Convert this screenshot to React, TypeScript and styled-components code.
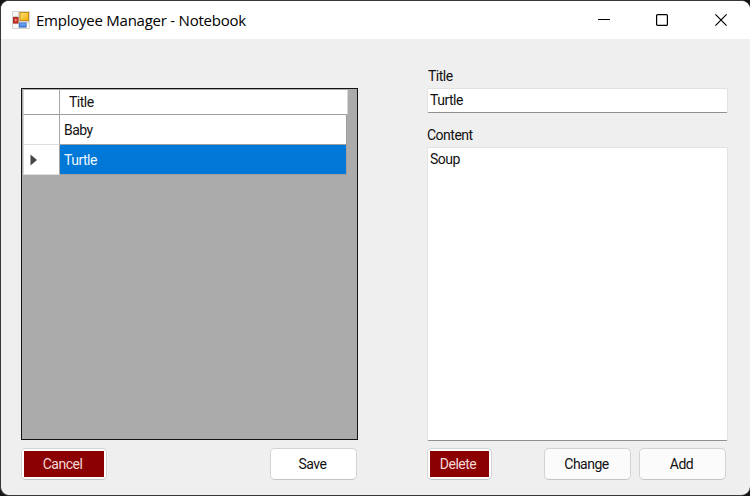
import React from "react";
import styled, { createGlobalStyle } from "styled-components";

const GlobalStyle = createGlobalStyle`
  * { box-sizing: border-box; }
  body { margin: 0; background: #151517; overflow: hidden; }
`;

const Window = styled.div`
  width: 750px;
  height: 496px;
  display: flex;
  flex-direction: column;
  overflow: hidden;
  background: #efefef;
  border: 1px solid #38363a;
  border-right-width: 0;
  border-radius: 9px;
  color: #111;
  font: 14px/18px Roboto, "Liberation Sans", sans-serif;
`;

const TitleBar = styled.header`
  height: 38px;
  flex: none;
  display: flex;
  align-items: center;
  background: #fff;
  padding-left: 11px;
`;

const Caption = styled.h1<{ $spacing: number }>`
  flex: 1;
  margin: 0 0 1px 6px;
  color: #000;
  font: 400 15px/20px "Open Sans", "Noto Sans", sans-serif;
  letter-spacing: ${(p) => p.$spacing}px;
  white-space: nowrap;
`;

const WindowButton = styled.button<{ $width: number }>`
  width: ${(p) => p.$width}px;
  height: 38px;
  padding: 0;
  border: 0;
  background: none;
  display: flex;
  align-items: center;
  justify-content: center;
`;

const Body = styled.main`
  flex: 1;
  display: flex;
  justify-content: space-between;
  padding: 28px 22px 0 20px;
`;

const ListPane = styled.section`
  width: 337px;
  padding-top: 21px;
`;

const Editor = styled.section`
  width: 301px;
`;

const Grid = styled.div`
  width: 337px;
  height: 352px;
  border: 1px solid #141414;
  background: #ababab;
  padding: 1px 0 0 1px;
`;

const GridRow = styled.div<{ $height: number; $width: number }>`
  display: grid;
  grid-template-columns: 37px 1fr;
  width: ${(p) => p.$width}px;
  height: ${(p) => p.$height}px;
`;

const RowHeader = styled.div<{ $line: string }>`
  display: flex;
  align-items: center;
  padding-left: 6px;
  background: #fff;
  border-left: 1px solid #d6d6d6;
  border-right: 1px solid #a5a5a5;
  border-bottom: 1px solid ${(p) => p.$line};
`;

const Cell = styled.div<{ $selected?: boolean; $header?: boolean }>`
  display: flex;
  align-items: center;
  padding-left: ${(p) => (p.$header ? 9 : 4)}px;
  background: ${(p) => (p.$selected ? "#0078d7" : "#fff")};
  color: ${(p) => (p.$selected ? "#eef6ff" : "#111")};
  border-bottom: 1px solid #9e9e9e;
  border-right: ${(p) => (p.$header ? "1px solid #d8d8d8" : "1px solid #a0a0a0")};
`;

const Text = styled.span<{ $spacing?: number }>`
  letter-spacing: ${(p) => p.$spacing ?? -0.5}px;
  white-space: nowrap;
`;

const Label = styled.label<{ $indent: number }>`
  display: block;
  height: 21px;
  padding-left: ${(p) => p.$indent}px;
`;

const Field = styled.div<{ $height: number; $gap: number }>`
  height: ${(p) => p.$height}px;
  margin-bottom: ${(p) => p.$gap}px;
  padding: 2px 3px 0 2px;
  background: #fff;
  border: 1px solid #e2e2e2;
  border-bottom: 1px solid #909090;
  border-radius: 2px;
`;

const Actions = styled.div<{ $top: number; $right: number }>`
  display: flex;
  gap: 8px;
  margin-top: ${(p) => p.$top}px;
  padding-right: ${(p) => p.$right}px;
`;

const Button = styled.button<{ $width: number; $danger?: boolean; $bright?: boolean; $push?: boolean }>`
  width: ${(p) => p.$width}px;
  height: 32px;
  flex: none;
  margin: 0 0 0 ${(p) => (p.$push ? "auto" : "0")};
  padding: ${(p) => (p.$danger ? "2px" : "0 2px 0 0")};
  border: 1px solid #d3d3d3;
  border-bottom-color: #c3c3c3;
  border-radius: 5px;
  background: ${(p) => (p.$bright || p.$danger ? "#fff" : "#fbfbfb")};
  color: #111;
  font: inherit;
  display: flex;
  align-items: center;
  justify-content: center;
`;

const Fill = styled.span`
  flex: 1;
  align-self: stretch;
  display: flex;
  align-items: center;
  justify-content: center;
  padding-right: 3px;
  background: #8b0000;
  color: #f2d9d9;
`;

const AppIcon = () => (
  <svg width="18" height="18" viewBox="0 0 18 18">
    <defs>
      <linearGradient id="gold" x1="0" y1="0" x2="1" y2="1">
        <stop offset="0" stopColor="#ffe477" />
        <stop offset="1" stopColor="#f3ab08" />
      </linearGradient>
      <linearGradient id="blue" x1="0" y1="0" x2="0" y2="1">
        <stop offset="0" stopColor="#83b4fa" />
        <stop offset="1" stopColor="#3e7ce2" />
      </linearGradient>
    </defs>
    <rect width="18" height="18" rx="1" fill="#d6d4d0" />
    <path d="M1 1h5v4H1zM1 13h5v4H1zM15 12h2v5h-2z" fill="#f7f7f7" />
    <rect x="8" y="1.5" width="8.5" height="8" fill="url(#gold)" stroke="#c78d15" />
    <rect x="1.5" y="6.5" width="4.5" height="5.5" fill="#d23b32" stroke="#a9201e" />
    <rect x="3" y="8" width="1.5" height="2" fill="#f28d80" />
    <rect x="7.5" y="12" width="6.5" height="4" fill="url(#blue)" stroke="#3c76d3" />
  </svg>
);

export default function App() {
  return (
    <>
      <GlobalStyle />
      <Window>
        <TitleBar>
          <AppIcon />
          <Caption $spacing={-0.24}>Employee Manager - Notebook</Caption>
          <WindowButton $width={58} aria-label="Minimize">
            <svg width="12" height="12"><path d="M0 5.5h12" stroke="#000" /></svg>
          </WindowButton>
          <WindowButton $width={58} aria-label="Maximize">
            <svg width="12" height="12"><rect x=".6" y=".6" width="10.8" height="10.8" rx="1" fill="none" stroke="#000" strokeWidth="1.2" /></svg>
          </WindowButton>
          <WindowButton $width={59} aria-label="Close">
            <svg width="12" height="12"><path d="M.4.4l11.2 11.2M11.6.4L.4 11.6" stroke="#000" strokeWidth="1.2" /></svg>
          </WindowButton>
        </TitleBar>
        <Body>
          <ListPane>
            <Grid>
              <GridRow $height={25} $width={325}>
                <RowHeader $line="#9e9e9e" />
                <Cell $header><Text>Title</Text></Cell>
              </GridRow>
              <GridRow $height={30} $width={324}>
                <RowHeader $line="#dedede" />
                <Cell><Text>Baby</Text></Cell>
              </GridRow>
              <GridRow $height={30} $width={324}>
                <RowHeader $line="#dedede">
                  <svg width="8" height="12"><path d="M0.5 0.5L7 6L0.5 11.5z" fill="#454545" /></svg>
                </RowHeader>
                <Cell $selected><Text>Turtle</Text></Cell>
              </GridRow>
            </Grid>
            <Actions $top={8} $right={1}>
              <Button $width={86} $danger><Fill><Text>Cancel</Text></Fill></Button>
              <Button $width={87} $bright $push><Text>Save</Text></Button>
            </Actions>
          </ListPane>
          <Editor>
            <Label $indent={1}><Text>Title</Text></Label>
            <Field $height={25} $gap={13}><Text>Turtle</Text></Field>
            <Label $indent={0}><Text>Content</Text></Label>
            <Field $height={294} $gap={0}><Text>Soup</Text></Field>
            <Actions $top={7} $right={2}>
              <Button $width={65} $danger><Fill><Text>Delete</Text></Fill></Button>
              <Button $width={87} $push><Text>Change</Text></Button>
              <Button $width={87}><Text>Add</Text></Button>
            </Actions>
          </Editor>
        </Body>
      </Window>
    </>
  );
}
